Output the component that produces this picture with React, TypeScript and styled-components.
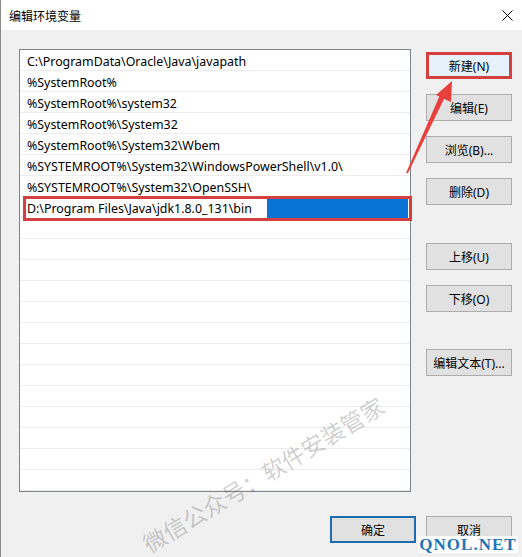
import React from "react";
import styled, { createGlobalStyle } from "styled-components";

const Global = createGlobalStyle`
  html, body { margin: 0; padding: 0; background: #f0f0f0; }
  body { font-family: "Noto Sans", "Noto Sans CJK SC", sans-serif; }
`;

const Window = styled.div`
  position: relative;
  width: 522px;
  height: 557px;
  box-sizing: border-box;
  background: #f0f0f0;
  border-left: 1px solid #8a8a8a;
  overflow: hidden;
  display: flex;
  flex-direction: column;
`;

const TitleBar = styled.div`
  height: 30px;
  flex: none;
  background: #ffffff;
  display: flex;
  align-items: center;
  justify-content: space-between;
  padding: 0 9px 0 8px;
  font-family: "Noto Sans CJK SC", sans-serif;
  font-size: 12px;
  color: #000;
`;

const Content = styled.div`
  display: flex;
  padding: 19px 10px 0 18px;
`;

const List = styled.div`
  width: 393px;
  height: 443px;
  box-sizing: border-box;
  border: 1px solid #7f848c;
  background: #fff;
  display: flex;
  flex-direction: column;
`;

const Row = styled.div`
  position: relative;
  height: 21px;
  flex: none;
  box-sizing: border-box;
  border-bottom: 1px solid #ececec;
  padding: 2px 0 0 7px;
  display: flex;
  align-items: center;
  font-size: 12.4px;
  color: #000;
  white-space: nowrap;
`;

const Editor = styled.div`
  position: absolute;
  left: 3px;
  right: -2px;
  top: -1px;
  height: 25px;
  box-sizing: border-box;
  border: 3px solid #d63f3f;
  background: #fff;
  display: flex;
  align-items: stretch;
  z-index: 2;
`;

const EditorText = styled.span`
  width: 240px;
  flex: none;
  padding-left: 1px;
  display: flex;
  align-items: center;
  font-size: 12.4px;
  color: #000;
`;

const EditorSel = styled.span`
  flex: 1;
  margin: 0 1px 0 0;
  background: #0a74d4;
`;

const Side = styled.div`
  margin-left: 15px;
  width: 86px;
  padding-top: 3px;
  display: flex;
  flex-direction: column;
`;

const Button = styled.div<{ $gap?: number; $highlight?: boolean; $default?: boolean }>`
  width: 86px;
  height: 27px;
  box-sizing: border-box;
  margin-top: ${(p) => (p.$gap ?? 0)}px;
  border: ${(p) =>
    p.$highlight ? "3px solid #d63f3f" : p.$default ? "2px solid #1f6bb0" : "1px solid #adadad"};
  background: ${(p) => (p.$highlight ? "#e5f1fb" : "#e1e1e1")};
  display: flex;
  align-items: center;
  justify-content: center;
  font-family: "Noto Sans", "Noto Sans CJK SC", sans-serif;
  font-size: 12px;
  color: #000;
  white-space: nowrap;
`;

const Footer = styled.div`
  display: flex;
  justify-content: flex-end;
  gap: 10px;
  padding: 24px 10px 0 0;
`;

const Close = styled.svg`
  width: 11px;
  height: 11px;
`;

const Watermark = styled.div`
  position: absolute;
  left: 262px;
  top: 474px;
  transform: translate(-50%, -50%) rotate(-31deg);
  font-family: "Noto Sans CJK SC", sans-serif;
  font-size: 23px;
  color: rgba(0, 0, 0, 0.2);
  white-space: nowrap;
  pointer-events: none;
  z-index: 5;
`;

const Badge = styled.div`
  position: absolute;
  left: 417px;
  top: 536px;
  width: 100px;
  height: 17px;
  background: #fff;
  display: flex;
  align-items: center;
  justify-content: center;
  font-family: "Liberation Serif", serif;
  font-weight: bold;
  font-size: 17px;
  letter-spacing: 1px;
  color: #1f74b8;
  z-index: 6;
`;

const Arrow = styled.svg`
  position: absolute;
  left: 0;
  top: 0;
  width: 522px;
  height: 557px;
  pointer-events: none;
  z-index: 4;
`;

const paths = [
  "C:\\ProgramData\\Oracle\\Java\\javapath",
  "%SystemRoot%",
  "%SystemRoot%\\system32",
  "%SystemRoot%\\System32",
  "%SystemRoot%\\System32\\Wbem",
  "%SYSTEMROOT%\\System32\\WindowsPowerShell\\v1.0\\",
  "%SYSTEMROOT%\\System32\\OpenSSH\\",
];

export default function App() {
  const rows = Array.from({ length: 21 }, (_, i) => i);
  return (
    <>
      <Global />
      <Window>
        <TitleBar>
          <span>编辑环境变量</span>
          <Close viewBox="0 0 11 11">
            <path d="M0.5 0.5 L10.5 10.5 M10.5 0.5 L0.5 10.5" stroke="#000" strokeWidth="1" fill="none" />
          </Close>
        </TitleBar>
        <Content>
          <List>
            {rows.map((i) => (
              <Row key={i}>
                {i < paths.length ? paths[i] : null}
                {i === 7 ? (
                  <Editor>
                    <EditorText>D:\Program Files\Java\jdk1.8.0_131\bin</EditorText>
                    <EditorSel />
                  </Editor>
                ) : null}
              </Row>
            ))}
          </List>
          <Side>
            <Button $highlight>新建(N)</Button>
            <Button $gap={15}>编辑(E)</Button>
            <Button $gap={15}>浏览(B)...</Button>
            <Button $gap={15}>删除(D)</Button>
            <Button $gap={38}>上移(U)</Button>
            <Button $gap={15}>下移(O)</Button>
            <Button $gap={37}>编辑文本(T)...</Button>
          </Side>
        </Content>
        <Footer>
          <Button $default>确定</Button>
          <Button>取消</Button>
        </Footer>
        <Arrow viewBox="0 0 522 557">
          <polygon points="405,173 407,173 444,97 439,95" fill="#e8403c" />
          <polygon points="451,81 435,95 450,102" fill="#e8403c" />
        </Arrow>
        <Watermark>微信公众号：软件安装管家</Watermark>
        <Badge>QNOL.NET</Badge>
      </Window>
    </>
  );
}
